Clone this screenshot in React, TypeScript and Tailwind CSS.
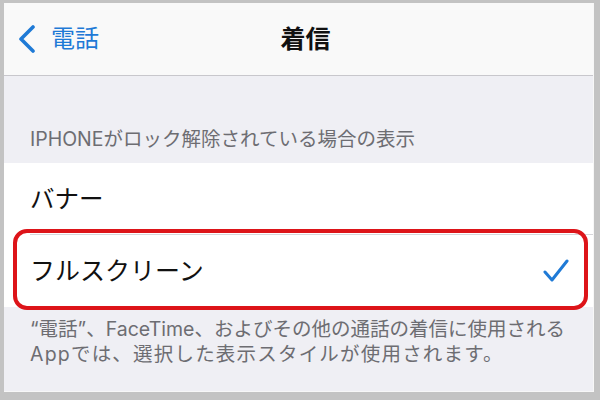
const FONT = "font-['Inter','Noto_Sans_CJK_JP',sans-serif]";

const Chevron = () => (
  <svg width="18" height="28" viewBox="0 0 18 28" fill="none">
    <path d="M15 2 L3 14 L15 26" stroke="#1f7ad6" strokeWidth="3.6" strokeLinecap="round" strokeLinejoin="round" />
  </svg>
);

const Check = () => (
  <svg width="26" height="24" viewBox="0 0 26 24" fill="none">
    <path d="M2 13 L9 21 L24 2" stroke="#1f7ad6" strokeWidth="3" strokeLinecap="round" strokeLinejoin="round" />
  </svg>
);

const App = () => {
  return (
    <div className={`w-[600px] h-[400px] bg-[#c3c3c3] pt-[3px] pl-[4px] pr-[6px] pb-[8px] ${FONT}`}>
      <div className="w-full h-full bg-[#efeff4] flex flex-col border-r border-b border-[#f7f7f7]">

        {/* Nav bar */}
        <div className="h-[73px] shrink-0 bg-[#f9f9f9] border-b border-[#c8c7cc] relative flex items-center">
          <div className="flex items-center pl-[14px] gap-[15px]">
            <Chevron />
            <span className="text-[24px] text-[#1f7ad6] leading-none">電話</span>
          </div>
          <div className="absolute inset-0 flex items-center justify-center pointer-events-none">
            <span className="text-[25px] font-bold text-[#111] leading-none ml-[14px]">着信</span>
          </div>
        </div>

        {/* Section header */}
        <div className="h-[87px] shrink-0 flex items-end pl-[26px] pb-[12px]">
          <span className="text-[19.5px] text-[#6d6d72] leading-[24px]">IPHONEがロック解除されている場合の表示</span>
        </div>

        {/* Rows */}
        <div className="bg-white shrink-0">
          <div className="h-[72px] flex items-center pl-[26px] relative">
            <span className="text-[24.5px] text-[#111] leading-none">バナー</span>
            <div className="absolute bottom-0 left-[26px] right-0 h-px bg-[#d6d6da]" />
          </div>
          <div className="h-[72px] flex items-center justify-between pl-[26px] pr-[24px] relative">
            <span className="text-[25px] text-[#111] leading-none">フルスクリーン</span>
            <Check />
            <div className="absolute -top-[6px] -bottom-[3px] left-[9px] right-[5px] border-4 border-[#dd1419] rounded-[14px]" />
          </div>
        </div>

        {/* Footer */}
        <div className="pl-[26px] pr-[4px] pt-[10px] text-[19.5px] text-[#6d6d72] leading-[25px] whitespace-nowrap">
          <p>“電話”、FaceTime、およびその他の通話の着信に使用される</p>
          <p className="tracking-[1.2px]">Appでは、選択した表示スタイルが使用されます。</p>
        </div>
      </div>
    </div>
  );
};

export default App;
